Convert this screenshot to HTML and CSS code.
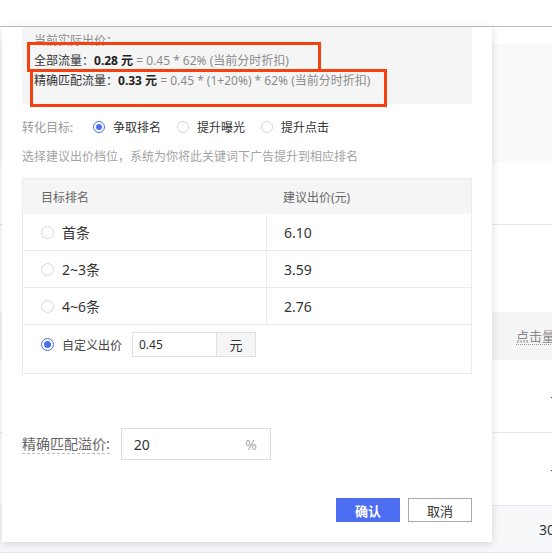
FILE: index.html
```html
<!DOCTYPE html>
<html lang="zh-CN">
<head>
<meta charset="utf-8">
<title>出价设置</title>
<link rel="stylesheet" href="styles.css">
</head>
<body>
<header class="topbar"></header>
<main class="bg">
  <div class="bg-summary"></div>
  <div class="bg-toolbar"></div>
  <div class="bg-table">
    <div class="bg-th"><span class="dotted">点击量</span></div>
    <div class="bg-tr">-</div>
    <div class="bg-tr">-</div>
    <div class="bg-tr bg-total">30</div>
  </div>
</main>

<section class="popover">
  <div class="info">
    <div class="info-line muted">当前实际出价：</div>
    <div class="info-line"><span class="key">全部流量：</span><b class="val">0.28 元</b><span class="muted"> = 0.45 * 62% (当前分时折扣)</span></div>
    <div class="info-line"><span class="key">精确匹配流量：</span><b class="val">0.33 元</b><span class="muted"> = 0.45 * (1+20%) * 62% (当前分时折扣)</span></div>
  </div>

  <div class="goal">
    <span class="goal-label">转化目标:</span>
    <label class="opt"><span class="radio small checked"></span>争取排名</label>
    <label class="opt"><span class="radio small"></span>提升曝光</label>
    <label class="opt"><span class="radio small"></span>提升点击</label>
  </div>

  <p class="desc">选择建议出价档位，系统为你将此关键词下广告提升到相应排名</p>

  <div class="table">
    <div class="row head">
      <div class="cell c1">目标排名</div>
      <div class="cell c2">建议出价(元)</div>
    </div>
    <div class="row">
      <div class="cell c1"><span class="radio"></span>首条</div>
      <div class="cell c2">6.10</div>
    </div>
    <div class="row">
      <div class="cell c1"><span class="radio"></span>2~3条</div>
      <div class="cell c2">3.59</div>
    </div>
    <div class="row">
      <div class="cell c1"><span class="radio"></span>4~6条</div>
      <div class="cell c2">2.76</div>
    </div>
    <div class="custom">
      <span class="radio checked"></span>
      <span class="custom-label">自定义出价</span>
      <div class="addon-input">
        <span class="field">0.45</span>
        <span class="addon">元</span>
      </div>
    </div>
  </div>

  <div class="premium">
    <span class="premium-label">精确匹配溢价:</span>
    <div class="premium-input"><span>20</span><span class="pct">%</span></div>
  </div>

  <div class="actions">
    <button class="btn primary">确认</button>
    <button class="btn">取消</button>
  </div>

  <div class="mark mark-1"></div>
  <div class="mark mark-2"></div>
</section>
</body>
</html>
```

FILE: styles.css
```css
* { box-sizing: border-box; }

html, body {
  margin: 0;
  padding: 0;
}

body {
  width: 552px;
  height: 559px;
  overflow: hidden;
  position: relative;
  background: #fff;
  font-family: "Noto Sans", "Noto Sans CJK SC", sans-serif;
  color: #333;
  font-size: 12px;
}

.topbar {
  height: 27px;
  border-bottom: 1px solid #bdbdbd;
  background: #fff;
}

/* background page */
.bg {
  width: 555px;
}
.bg-summary {
  margin-top: 17px;
  height: 119px;
  background: #fafafa;
}
.bg-toolbar {
  height: 62px;
  border-bottom: 1px solid #e6e6e6;
}
.bg-table {
  margin-top: 87px;
}
.bg-th {
  height: 48px;
  background: #f5f5f5;
  display: flex;
  align-items: center;
  justify-content: flex-end;
  font-size: 13px;
  color: #888;
}
.dotted {
  border-bottom: 1px dotted #999;
  line-height: 16px;
}
.bg-tr {
  height: 73px;
  border-bottom: 1px solid #e8e8e8;
  display: flex;
  align-items: center;
  justify-content: flex-end;
  font-size: 14px;
  color: #333;
}
.bg-total {
  height: 47px;
  background: #f7f8fa;
}

/* popover */
.popover {
  position: absolute;
  left: 2px;
  top: 27px;
  width: 490px;
  padding: 0 20px 20px;
  background: #fff;
  box-shadow: 0 2px 8px rgba(0, 0, 0, 0.14);
}

.info {
  background: #f5f5f5;
  padding: 4px 12px 13px;
  line-height: 20px;
  font-size: 12px;
}
.info-line { white-space: nowrap; }
.muted { color: #8c8c8c; }
.key { color: #333; }
.val { color: #222; font-weight: 700; font-size: 12px; }

.goal {
  margin-top: 13px;
  height: 20px;
  display: flex;
  align-items: center;
  font-size: 12px;
}
.goal-label {
  width: 71px;
  color: #9a9a9a;
}
.opt {
  display: flex;
  align-items: center;
  gap: 8px;
  margin-right: 16px;
  color: #333;
}

.radio {
  width: 13px;
  height: 13px;
  border-radius: 50%;
  border: 1px solid #d6d6d6;
  background: #fff;
  flex: none;
  display: inline-flex;
  align-items: center;
  justify-content: center;
}
.radio.small {
  width: 12px;
  height: 12px;
}
.radio.checked {
  border-color: #4e6ef2;
}
.radio.checked::after {
  content: "";
  width: 7px;
  height: 7px;
  border-radius: 50%;
  background: #4e6ef2;
}
.radio.small.checked::after {
  width: 6px;
  height: 6px;
}

.desc {
  margin: 10px 0 0;
  line-height: 20px;
  color: #a3a3a3;
  font-size: 12px;
}

.table {
  margin-top: 11px;
  border: 1px solid #ebebeb;
}
.row {
  display: grid;
  grid-template-columns: 244px 1fr;
  height: 37px;
  border-bottom: 1px solid #ebebeb;
  font-size: 14px;
  color: #333;
}
.row.head {
  height: 35px;
  border-bottom: none;
  background: #f5f5f5;
  font-size: 12px;
  color: #666;
}
.cell {
  display: flex;
  align-items: center;
}
.c1 {
  padding-left: 18px;
  gap: 8px;
  border-right: 1px solid #ebebeb;
}
.head .c1 { border-right: none; }
.c2 { padding-left: 17px; }
.head .c2 { padding-left: 16px; }

.custom {
  display: flex;
  align-items: center;
  padding: 7px 0 16px 18px;
  font-size: 12px;
  color: #444;
}
.custom-label {
  margin-left: 8px;
  width: 70px;
}
.addon-input {
  display: flex;
  height: 25px;
}
.field {
  width: 84px;
  border: 1px solid #e0e0e0;
  border-right: none;
  padding-left: 6px;
  display: flex;
  align-items: center;
  font-size: 12px;
  color: #333;
}
.addon {
  width: 40px;
  border: 1px solid #e0e0e0;
  background: #f5f5f5;
  display: flex;
  align-items: center;
  justify-content: center;
  font-size: 13px;
  color: #333;
}

.premium {
  margin-top: 54px;
  display: flex;
  align-items: center;
  gap: 11px;
}
.premium-label {
  font-size: 14px;
  color: #666;
  line-height: 18px;
  border-bottom: 1px dashed #bbb;
}
.premium-input {
  width: 150px;
  height: 32px;
  border: 1px solid #dcdcdc;
  display: flex;
  align-items: center;
  justify-content: space-between;
  padding: 0 13px 0 12px;
  font-size: 14px;
  color: #333;
}
.pct { color: #aaa; }

.actions {
  margin-top: 38px;
  display: flex;
  justify-content: flex-end;
  gap: 8px;
}
.btn {
  width: 64px;
  height: 24px;
  border: 1px solid #aaa;
  background: #fff;
  color: #333;
  font-family: inherit;
  font-size: 13px;
  padding: 0;
  cursor: pointer;
}
.btn.primary {
  background: #4e6ef2;
  border-color: #4e6ef2;
  color: #fff;
  font-weight: 700;
}

/* annotation boxes */
.mark {
  position: absolute;
  border: 3px solid #f5400f;
}
.mark-1 {
  left: 25px;
  top: 15px;
  width: 294px;
  height: 30px;
}
.mark-2 {
  left: 28px;
  top: 42px;
  width: 357px;
  height: 38px;
}
```
